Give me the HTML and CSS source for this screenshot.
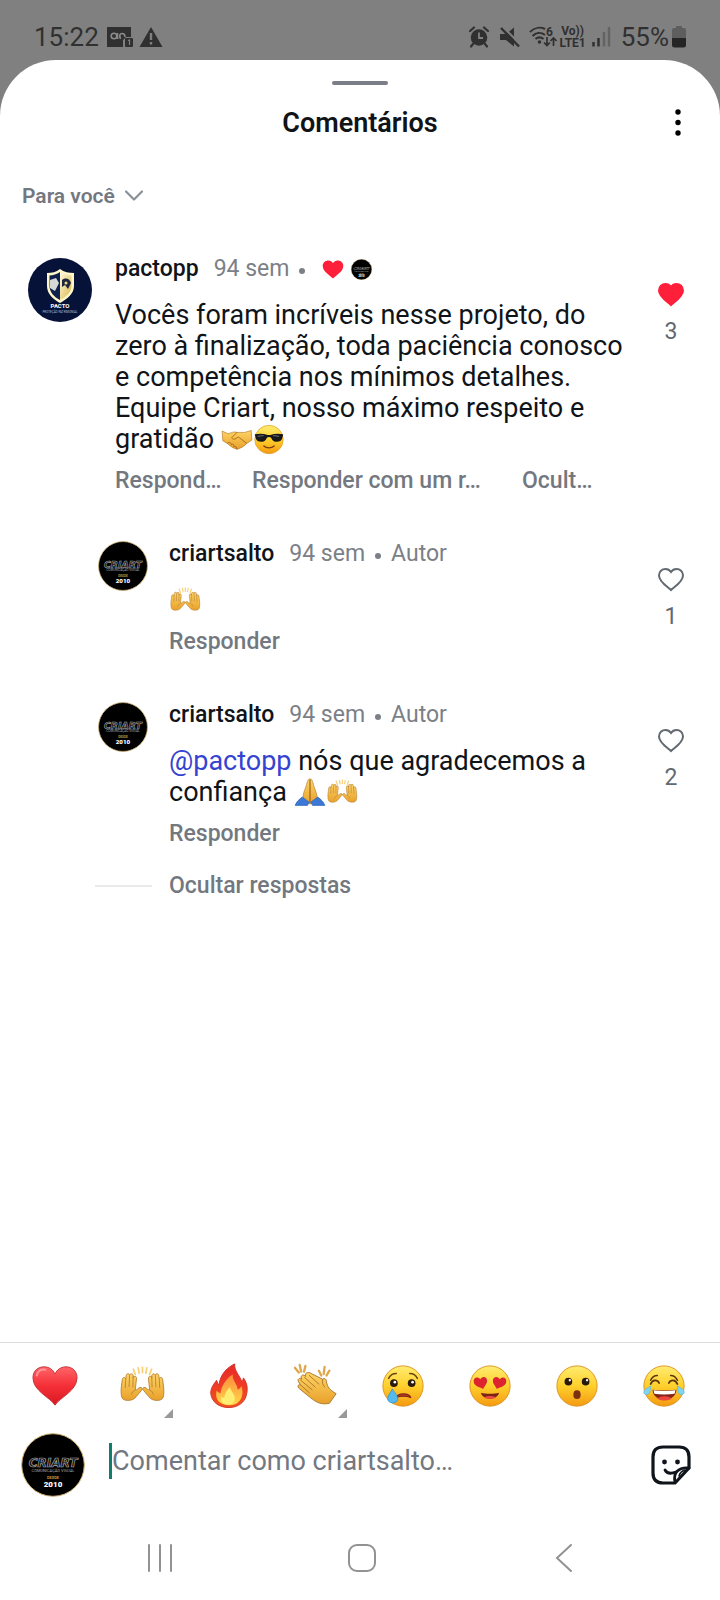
FILE: index.html
```html
<!DOCTYPE html>
<html lang="pt-BR">
<head>
  <meta charset="UTF-8">
  <meta name="viewport" content="width=device-width, initial-scale=1">
  <title>Comentários</title>
  <link rel="stylesheet" href="styles.css">
</head>
<body>

  <!-- símbolos reutilizados -->
  <svg class="sprite" aria-hidden="true">
    <defs>
      <linearGradient id="g-face" x1="0" y1="0" x2="0" y2="1">
        <stop offset="0" stop-color="#ffec70"/><stop offset=".5" stop-color="#ffd02c"/><stop offset="1" stop-color="#f59a12"/>
      </linearGradient>
      <linearGradient id="g-hand" x1="0" y1="0" x2="0" y2="1">
        <stop offset="0" stop-color="#ffd466"/><stop offset="1" stop-color="#e8a02a"/>
      </linearGradient>
      <linearGradient id="g-red" x1="0" y1="0" x2="0" y2="1">
        <stop offset="0" stop-color="#ff6468"/><stop offset=".5" stop-color="#f42f38"/><stop offset="1" stop-color="#da1822"/>
      </linearGradient>
      <linearGradient id="g-fire" x1="0" y1="0" x2="0" y2="1">
        <stop offset="0" stop-color="#e8282a"/><stop offset="1" stop-color="#f4511e"/>
      </linearGradient>
      <linearGradient id="g-flame" x1="0" y1="0" x2="0" y2="1">
        <stop offset="0" stop-color="#ff8a3c"/><stop offset="1" stop-color="#ffd84a"/>
      </linearGradient>
      <linearGradient id="g-gold" x1="0" y1="0" x2="1" y2="1">
        <stop offset="0" stop-color="#fffbe0"/><stop offset="1" stop-color="#d9b648"/>
      </linearGradient>
      <path id="hand-up" d="M2.5 34C1.5 28 3 22 3.5 17C3.8 14.5 7 14.5 7 17L7.5 13C7.8 10.5 11 10.8 11 13C11.5 10.5 15 11 14.8 13.5V15.5C15.5 13 18.7 13.5 18.2 16.5L17 28C19 28.5 20 26 22 25.5C24 25.5 25 27 23.5 28.5L18 35C16 38 13 39 9 39C5 39 3 37.5 2.5 34Z"/>
      <path id="hand-lines" d="M7 17L6.500 26M11 13L10.500 25M14.800 14L14.500 25.500M17 28C15 29 13.500 31 13 33"/>
    </defs>

    <symbol id="heart-emoji" viewBox="0 0 48 48">
      <path d="M24 44C19 36 1 29 1 15.500C1 8 6.500 4 12.500 4C18 4 22 7 24 11.500C26 7 30 4 35.500 4C41.500 4 47 8 47 15.500C47 29 29 36 24 44Z" fill="url(#g-red)" stroke="#c3343a"/>
      <path d="M5 13C6 8 10 6 14 7" stroke="#ffb0b0" stroke-width="2" fill="none" stroke-linecap="round" opacity=".7"/>
    </symbol>

    <symbol id="hands-emoji" viewBox="0 0 48 48">
      <path d="M15 6.500L17 12M20 5L21 10.500M24.500 4.500V10M29 5L28 10.500M34 6.500L32 12" stroke="#f8cf72" stroke-width="1.800" stroke-linecap="round"/>
      <g stroke="#b9853a" stroke-linejoin="round">
        <use href="#hand-up" fill="url(#g-hand)"/>
        <use href="#hand-lines" fill="none"/>
        <g transform="translate(49 0) scale(-1 1)">
          <use href="#hand-up" fill="url(#g-hand)"/>
          <use href="#hand-lines" fill="none"/>
        </g>
      </g>
    </symbol>

    <symbol id="fire-emoji" viewBox="0 0 48 48">
      <path d="M30 1C29 8 36 14 37 19C38.500 18 39 17 39 15.500C43 21 44 27 42 34C40 42 32 46.500 24 46.500C14 46.500 6 41 5 32C4.500 26 9 21 11 18C12 20 12 21 13.500 23C15 11 23 4 30 1Z" fill="url(#g-fire)" stroke="#d2332a"/>
      <path d="M28 12C27 18 33 22 33 28C35 27 36 26 37 24C40 33 37 44 24 44C14 44 9 38 11 29C13 31 14 31 15 32C16 24 21 16 28 12Z" fill="url(#g-flame)"/>
      <path d="M25 25C26 30 30 32 30 37C30 41 27 43.500 23 43.500C17 43.500 15 40 16 35C18 37 18 36 19 36C20 31 22 28 25 25Z" fill="#ffee72"/>
    </symbol>

    <symbol id="clap-emoji" viewBox="0 0 48 48">
      <path d="M2 5L6 10M7 2L8.500 9M13 3L11.500 9M27 8L29.500 13M33 4L32 11.500M38 8L35 13" stroke="#dfa74a" stroke-width="2.400" stroke-linecap="round"/>
      <path d="M6 20C4 17 7 15 9 17C7 13 11 11 13 14C12 10 16 9 19 11L31 17C33 15 35 17 35 20C36 25 38 28 45 32L38 42C30 44 24 41 18 36L7 27C4 25 5 22 8 23Z" fill="url(#g-hand)" stroke="#a9772c" stroke-linejoin="round"/>
      <path d="M8 18L20 28M12 15L23 25M17 13L27 22M8 23L17 31M31 17C30 20 31 23 33 25" stroke="#a9772c" fill="none" stroke-linecap="round"/>
    </symbol>

    <symbol id="cry-emoji" viewBox="0 0 48 48">
      <circle cx="24" cy="24" r="21" fill="url(#g-face)" stroke="#dd9423"/>
      <path d="M9 16C11 12 14 11 17 11M31 11C34 11 37 12 39 16" stroke="#6b4310" stroke-width="1.600" fill="none" stroke-linecap="round"/>
      <circle cx="14.500" cy="21" r="4" fill="#2a1a0c"/><circle cx="33" cy="21" r="4" fill="#2a1a0c"/>
      <circle cx="15.500" cy="20" r="1.400" fill="#fff"/><circle cx="34" cy="20" r="1.400" fill="#fff"/>
      <path d="M17 36C19 31 30 31 32 36C28 34 21 34 17 36Z" fill="#c9382c" stroke="#7b2413" stroke-width="1.400" stroke-linejoin="round"/>
      <path d="M13 27C15 31 19 34 18.500 38C18 43 8 43 8 37C8 34 11 31 13 27Z" fill="#53b9ee" stroke="#2e93cf" stroke-width=".8"/>
    </symbol>

    <symbol id="love-emoji" viewBox="0 0 48 48">
      <circle cx="24" cy="24" r="21" fill="url(#g-face)" stroke="#dd9423"/>
      <path d="M17 27C13 25 7 24 7 19C7 15 11 14 14 17C16 13 21 14 21 18.500C21 22 18 24 17 27Z" fill="#dd232e"/>
      <path d="M31 27C30 24 27 22 27 18.500C27 14 32 13 34 17C37 14 41 15 41 19C41 24 35 25 31 27Z" fill="#dd232e"/>
      <path d="M14.500 31C20 32.500 28 32.500 33.500 31C32 39 16 39 14.500 31Z" fill="#7b2413"/>
      <path d="M18 36C21 34 27 34 30 36C27 38 21 38 18 36Z" fill="#e94a46"/>
    </symbol>

    <symbol id="wow-emoji" viewBox="0 0 48 48">
      <circle cx="24" cy="24" r="21" fill="url(#g-face)" stroke="#dd9423"/>
      <circle cx="15" cy="19.500" r="4" fill="#2a1a0c"/><circle cx="33" cy="19.500" r="4" fill="#2a1a0c"/>
      <circle cx="16.500" cy="18" r="1.200" fill="#fff"/><circle cx="34.500" cy="18" r="1.200" fill="#fff"/>
      <ellipse cx="24" cy="33" rx="3.800" ry="4.500" fill="#7b3010"/>
    </symbol>

    <symbol id="joy-emoji" viewBox="0 0 48 48">
      <circle cx="24" cy="24" r="21" fill="url(#g-face)" stroke="#dd9423"/>
      <path d="M10 22C12 17 17 17 19 21M29 21C31 17 36 17 38 22M10 18C12 14 14 13 17 13M31 13C34 13 36 14 38 18" stroke="#5b3510" stroke-width="1.700" fill="none" stroke-linecap="round"/>
      <path d="M12 28C20 29 28 29 37 28C36 42 13 42 12 28Z" fill="#86251a"/>
      <path d="M13 28.500C20 29.500 28 29.500 36 28.500L35 32C28 33 20 33 14 32Z" fill="#fff"/>
      <path d="M17 37C21 34 28 34 32 37C28 40 21 40 17 37Z" fill="#ee4540"/>
      <path d="M10 24C10 29 9 33 6 33C2 33 2 29 5 27ZM38 24C38 29 39 33 42 33C46 33 46 29 43 27Z" fill="#7fd4f2" stroke="#54b4dc" stroke-width=".6"/>
    </symbol>

    <symbol id="cool-emoji" viewBox="0 0 48 48">
      <circle cx="24" cy="24" r="22" fill="url(#g-face)" stroke="#dd9423"/>
      <path d="M2 16C9 14.500 16 15 22 17H26C32 15 39 14.500 46 16L44.500 22C43 29 30 30 27.500 21.500C26 19.500 22 19.500 20.500 21.500C18 30 5 29 3.500 22Z" fill="#17181c"/>
      <path d="M7 19L15 18M31 18L39 19" stroke="#70747c" stroke-width="1.500" stroke-linecap="round"/>
      <path d="M16 34C20 38 28 38 32 34" stroke="#79400f" stroke-width="2" fill="none" stroke-linecap="round"/>
    </symbol>

    <symbol id="shake-emoji" viewBox="0 0 48 48">
      <path d="M1 11L10 15C15 14 19 11 24 13L36 13L46 10L47 25L39 30C36 34 29 38 24 39C19 38 13 34 9 30L2 26Z" fill="url(#g-hand)" stroke="#b07a28" stroke-linejoin="round"/>
      <path d="M24 13L16 21C17 25 21 24 26 20L39 30M9 30C13 27 15 29 15 32C18 30 20 32 19 35C22 34 24 36 24 39" stroke="#a66d20" stroke-width="1.500" fill="none" stroke-linecap="round"/>
    </symbol>

    <symbol id="pray-emoji" viewBox="0 0 48 48">
      <path d="M23.500 3C20 3 20 9 17 17C15 22 13 27 13 34L24 42L35 34C35 27 33 22 31 17C28 9 28 3 24.500 3Z" fill="url(#g-hand)" stroke="#b07a28" stroke-linejoin="round"/>
      <path d="M24 4V39" stroke="#98601a" stroke-width="1.800" fill="none"/>
      <path d="M12 31L23 39L20 44H1C3 38 7 35 12 31ZM36 31L25 39L28 44H47C45 38 41 35 36 31Z" fill="#3c79d6" stroke="#2a5fb5"/>
    </symbol>

    <symbol id="heart" viewBox="0 0 28 28">
      <path d="M14 25C11 22 2 17 2 10.500C2 6.500 5 4 8.500 4C11 4 13 5.500 14 7C15 5.500 17 4 19.500 4C23 4 26 6.500 26 10.500C26 17 17 22 14 25Z"/>
    </symbol>

    <symbol id="criart-logo" viewBox="0 0 64 64">
      <circle cx="32" cy="32" r="31.300" fill="#000" stroke="#cdb071"/>
      <text x="32" y="34" text-anchor="middle" font-family="DejaVu Sans, sans-serif" font-size="12" font-style="italic" font-weight="700" fill="#111" stroke="#aaa" stroke-width=".7">CRIART</text>
      <text x="32" y="39" text-anchor="middle" font-size="4" fill="#aaa">COMUNICAÇÃO VISUAL</text>
      <text x="32" y="46" text-anchor="middle" font-size="4" font-weight="700" fill="#c98f3c">DESDE</text>
      <text x="32" y="54" text-anchor="middle" font-size="8" font-weight="900" fill="#fff">2010</text>
    </symbol>
  </svg>

  <header class="status-bar">
    <div class="status-group">
      <span>15:22</span>
      <svg class="icon-voicemail" width="28" height="22" viewBox="0 0 28 22">
        <path d="M1 1H25V11H20L17 14V21H1Z" fill="#303030"/>
        <g fill="none" stroke="#8c8c8c" stroke-width="1.600"><circle cx="8" cy="10" r="2.800"/><path d="M11.500 7V13M14.500 13C13 9 14 7.500 16 7.500C18 7.500 19 9 19 11"/></g>
        <rect x="19" y="12" width="8" height="9" rx="1" fill="#303030"/><path d="M22 14.500L23.500 14V19" stroke="#808080" stroke-width="1.200" fill="none"/>
      </svg>
      <svg width="24" height="22" viewBox="0 0 24 22"><path d="M12 1L23.500 21H.5Z" fill="#303030"/><path d="M12 7V14M12 16V18.500" stroke="#808080" stroke-width="2.400"/></svg>
    </div>
    <div class="status-group">
      <svg class="icon-alarm" width="20" height="22" viewBox="0 0 20 22">
        <circle cx="10" cy="11.500" r="8.300" fill="#303030"/>
        <path d="M1 5L5 1.500M15 1.500L19 5M4 18L2 20.500M16 18L18 20.500" stroke="#303030" stroke-width="2.200" stroke-linecap="round"/>
        <path d="M10 6.500V12H14" stroke="#808080" stroke-width="1.800" fill="none"/>
      </svg>
      <svg class="icon-mute" width="22" height="22" viewBox="0 0 22 22">
        <path d="M1 8H7L15 1.500V20.500L7 14H1Z" fill="#303030"/><path d="M4 1L22 19" stroke="#808080" stroke-width="2"/><path d="M2 2L20 20.500" stroke="#303030" stroke-width="2.400"/>
      </svg>
      <svg width="28" height="22" viewBox="0 0 28 22">
        <g fill="none" stroke="#303030" stroke-width="2"><path d="M1 6C6 1 12 1 16 3M3.500 10C7 6.500 12 6 16 9M6.500 13C9 11 12 11 14.500 13"/><path d="M18 11V19M15 16.500L18 19.500L21 16.500M24.500 20V12.500M21.500 15L24.500 12L27.500 15" stroke-width="1.700"/></g>
        <circle cx="10.500" cy="16" r="1.800" fill="#303030"/>
        <text x="17" y="10" font-size="12" font-weight="700" fill="#303030">6</text>
      </svg>
      <span class="lte"><span>Vo))</span><span>LTE1</span></span>
      <svg class="icon-signal" width="20" height="22" viewBox="0 0 20 22"><path d="M2.500 16V20.500M7.500 12V20.500" stroke="#303030" stroke-width="2.500"/><path d="M13 6V20.500M18 1V20.500" stroke="#636363" stroke-width="2.500"/></svg>
      <span>55%</span>
      <svg class="icon-battery" width="14" height="22" viewBox="0 0 14 22"><path d="M4 0H10V2H12Q14 2 14 4V12H0V4Q0 2 2 2H4Z" fill="#5e5e5e"/><path d="M0 12H14V19Q14 21.500 11.500 21.500H2.500Q0 21.500 0 19Z" fill="#252525"/></svg>
    </div>
  </header>

  <main class="sheet">
    <div class="handle"></div>
    <div class="sheet-header">
      <h1>Comentários</h1>
      <button class="menu" aria-label="Mais opções">
        <svg width="6" height="28" viewBox="0 0 6 28"><circle cx="3" cy="3" r="2.700"/><circle cx="3" cy="13.500" r="2.700"/><circle cx="3" cy="24" r="2.700"/></svg>
      </button>
    </div>

    <button class="filter">
      Para você
      <svg width="18" height="12" viewBox="0 0 18 12"><path d="M1 1.500L9 9.500L17 1.500" fill="none" stroke="#8b9097" stroke-width="2.200" stroke-linecap="round" stroke-linejoin="round"/></svg>
    </button>

    <section class="comments">
      <article class="comment">
        <svg class="avatar" viewBox="0 0 64 64">
          <circle cx="32" cy="32" r="32" fill="#071238"/>
          <path d="M32 11C28 14 24 15 19 15V28C19 36 25 41 32 45C39 41 46 36 46 28V15C41 15 36 14 32 11Z" fill="#fff7c9"/>
          <path d="M32 14C29 16 25 17.500 21.500 17.500V28C21.500 34 26 39 32 42Z" fill="#10204c"/>
          <path d="M32 14C36 16 40 17.500 43.500 17.500V28C43.500 34 38 39 32 42Z" fill="url(#g-gold)"/>
          <path d="M22 22L28 20L31 25L27 33L22 30Z" fill="#d5d8d6"/>
          <path d="M34 22C38 19 42 21 43 25L40 31L37 27L34 29Z" fill="#1e2740"/><circle cx="38" cy="25" r="1.500" fill="#eed980"/>
          <text x="32" y="50" text-anchor="middle" font-size="6" font-weight="700" fill="#fff">PACTO</text>
          <text x="32" y="55" text-anchor="middle" font-size="3" fill="#b6bac9">PROTEÇÃO PATRIMONIAL</text>
        </svg>
        <div class="content">
          <div class="meta">
            <a href="#" class="user">pactopp</a>
            <span>94 sem</span><i class="dot"></i>
            <svg class="mini-heart" viewBox="0 0 28 28"><use href="#heart"/></svg>
            <svg class="mini-avatar" viewBox="0 0 64 64"><use href="#criart-logo"/></svg>
          </div>
          <p>Vocês foram incríveis nesse projeto, do zero à finalização, toda paciência conosco e competência nos mínimos detalhes. Equipe Criart, nosso máximo respeito e gratidão <svg class="emoji" role="img" aria-label="aperto de mãos"><use href="#shake-emoji"/></svg><svg class="emoji" role="img" aria-label="óculos escuros"><use href="#cool-emoji"/></svg></p>
          <div class="actions">
            <button>Respond…</button>
            <button>Responder com um r…</button>
            <button>Ocult…</button>
          </div>
        </div>
        <button class="like liked"><svg viewBox="0 0 28 28"><use href="#heart"/></svg>3</button>
      </article>

      <article class="comment reply">
        <svg class="avatar" viewBox="0 0 64 64"><use href="#criart-logo"/></svg>
        <div class="content">
          <div class="meta">
            <a href="#" class="user">criartsalto</a>
            <span>94 sem</span><i class="dot"></i><span>Autor</span>
          </div>
          <p><svg class="emoji" role="img" aria-label="mãos para cima"><use href="#hands-emoji"/></svg></p>
          <div class="actions"><button>Responder</button></div>
        </div>
        <button class="like"><svg viewBox="0 0 28 28"><use href="#heart"/></svg>1</button>
      </article>

      <article class="comment reply">
        <svg class="avatar" viewBox="0 0 64 64"><use href="#criart-logo"/></svg>
        <div class="content">
          <div class="meta">
            <a href="#" class="user">criartsalto</a>
            <span>94 sem</span><i class="dot"></i><span>Autor</span>
          </div>
          <p><a href="#" class="mention">@pactopp</a> nós que agradecemos a confiança <svg class="emoji" role="img" aria-label="mãos juntas"><use href="#pray-emoji"/></svg><svg class="emoji" role="img" aria-label="mãos para cima"><use href="#hands-emoji"/></svg></p>
          <div class="actions"><button>Responder</button></div>
        </div>
        <button class="like"><svg viewBox="0 0 28 28"><use href="#heart"/></svg>2</button>
      </article>

      <button class="hide-replies">Ocultar respostas</button>
    </section>

    <footer class="composer">
      <div class="reactions">
        <button aria-label="Coração"><svg><use href="#heart-emoji"/></svg></button>
        <button class="variants" aria-label="Mãos para cima"><svg><use href="#hands-emoji"/></svg></button>
        <button aria-label="Fogo"><svg><use href="#fire-emoji"/></svg></button>
        <button class="variants" aria-label="Palmas"><svg><use href="#clap-emoji"/></svg></button>
        <button aria-label="Choro"><svg><use href="#cry-emoji"/></svg></button>
        <button aria-label="Apaixonado"><svg><use href="#love-emoji"/></svg></button>
        <button aria-label="Surpreso"><svg><use href="#wow-emoji"/></svg></button>
        <button aria-label="Risada"><svg><use href="#joy-emoji"/></svg></button>
      </div>
      <div class="write">
        <svg class="avatar" viewBox="0 0 64 64"><use href="#criart-logo"/></svg>
        <input type="text" aria-label="Comentário" placeholder="Comentar como criartsalto…">
        <button class="sticker" aria-label="Figurinhas">
          <svg width="40" height="40" viewBox="0 0 40 40" fill="none" stroke="#10151b" stroke-width="3.200" stroke-linejoin="round" stroke-linecap="round">
            <path d="M12 2H28Q38 2 38 12V23L24 38H12Q2 38 2 28V12Q2 2 12 2Z"/>
            <path d="M24 37C22 28 27 22 38 23" stroke-width="2.800"/>
            <path d="M14 25C16 29 20 29 25 27" stroke-width="2.800"/>
            <path d="M28 31C29 27 31 26 34 25" stroke-width="1.500"/>
            <circle cx="13.500" cy="17" r="2.400" fill="#10151b" stroke="none"/><circle cx="26.500" cy="17" r="2.400" fill="#10151b" stroke="none"/>
          </svg>
        </button>
      </div>
    </footer>

    <nav class="system-nav">
      <button aria-label="Recentes"><svg viewBox="0 0 30 30"><path d="M4 2V28M15 2V28M26 2V28"/></svg></button>
      <button aria-label="Início"><svg viewBox="0 0 30 30"><rect x="2" y="2" width="26" height="26" rx="8"/></svg></button>
      <button aria-label="Voltar"><svg viewBox="0 0 30 30"><path d="M22 2L8 15L22 28"/></svg></button>
    </nav>
  </main>

</body>
</html>
```
FILE: styles.css
```css
* {
  box-sizing: border-box;
}
body {
  margin: 0;
  min-height: 100vh;
  display: flex;
  flex-direction: column;
  background-color: #808080;
  font-family: Roboto, sans-serif;
  color: #101418;
}
h1, p {
  margin: 0;
}
a {
  color: inherit;
  text-decoration: none;
}
button {
  padding: 0;
  border: none;
  background: none;
  font: inherit;
  color: inherit;
  cursor: pointer;
}
svg {
  flex-shrink: 0;
}
.sprite {
  position: absolute;
  width: 0;
  height: 0;
}

/* barra de status */
.status-bar {
  height: 60px;
  padding: 14px 34px 0 34px;
  display: flex;
  justify-content: space-between;
  align-items: center;
  color: #303030;
  font-size: 26px;
  line-height: 30px;
}
.status-group {
  display: flex;
  align-items: center;
}
.icon-voicemail { margin: 0 5px 0 7px; }
.icon-alarm { margin-right: 10px; }
.icon-mute { margin-right: 8px; }
.icon-signal { margin: 0 10px 0 5px; }
.icon-battery { margin-left: 3px; }
.lte {
  display: flex;
  flex-direction: column;
  align-items: center;
  margin-left: 2px;
  font-size: 12px;
  font-weight: 700;
  line-height: 12px;
}

.sheet {
  flex: 1;
  display: flex;
  flex-direction: column;
  background-color: #fff;
  border-radius: 56px 56px 0 0;
}
.handle {
  width: 56px;
  height: 4px;
  margin: 21px auto 0;
  border-radius: 2px;
  background-color: #7b7d87;
}
.sheet-header {
  display: grid;
  grid-template-columns: 1fr auto 1fr;
  align-items: center;
  padding: 22px 39px 0;
}
.sheet-header h1 {
  grid-column: 2;
  font-size: 27px;
  font-weight: 600;
  line-height: 32px;
}
.menu {
  justify-self: end;
  display: flex;
}
.filter {
  align-self: flex-start;
  display: flex;
  align-items: center;
  gap: 10px;
  margin: 43px 0 0 22px;
  font-size: 21px;
  font-weight: 600;
  line-height: 28px;
  color: #737880;
}

/* comentários */
.comments {
  display: flex;
  flex-direction: column;
  padding-top: 45px;
}
.comment {
  display: grid;
  grid-template-columns: 115px 1fr 98px;
  align-items: start;
  margin-bottom: 45px;
}
.avatar {
  width: 64px;
  height: 64px;
}
.comment .avatar {
  margin: 3px 0 0 28px;
}
.reply {
  grid-template-columns: 169px 1fr 98px;
}
.reply .avatar {
  width: 50px;
  height: 50px;
  margin: 1px 0 0 98px;
}
.meta {
  display: flex;
  align-items: center;
  font-size: 23px;
  line-height: 28px;
  color: #7b8087;
}
.user {
  margin-right: 15px;
  font-weight: 500;
  color: #101418;
}
.dot {
  width: 6px;
  height: 6px;
  margin: 4px 10px 0 10px;
  border-radius: 50%;
  background-color: #7b8087;
}
.mini-heart {
  width: 24px;
  height: 24px;
  margin: 0 6px;
  fill: #fe1f3a;
}
.mini-avatar {
  width: 21px;
  height: 21px;
}
/* o texto avança um pouco sobre a coluna das curtidas */
.comment p {
  margin: 17px -8px 0 0;
  font-size: 27px;
  line-height: 31px;
}
.mention {
  color: #3443d0;
}
.emoji {
  width: 32px;
  height: 31px;
  vertical-align: top;
}
.actions {
  display: grid;
  grid-template-columns: 137px 270px 1fr;
  margin-top: 12px;
}
.actions button,
.hide-replies {
  font-size: 23px;
  font-weight: 500;
  line-height: 28px;
  text-align: left;
  white-space: nowrap;
  color: #737880;
}
.like {
  display: flex;
  flex-direction: column;
  align-items: center;
  gap: 10px;
  padding-top: 25px;
  font-size: 23px;
  line-height: 28px;
  color: #636971;
}
.like svg {
  width: 28px;
  height: 28px;
  fill: none;
  stroke: #636971;
  stroke-width: 2;
}
.like.liked svg {
  fill: #fe1f3a;
  stroke: #fe1f3a;
}
.hide-replies {
  display: flex;
  align-items: center;
  gap: 17px;
  margin: -21px 0 0 95px;
}
.hide-replies::before {
  content: "";
  width: 57px;
  height: 2px;
  background-color: #e9eaec;
}

/* rodapé */
.composer {
  margin-top: auto;
  border-top: 1px solid #dcdddf;
}
.reactions {
  display: grid;
  grid-template-columns: repeat(8, 1fr);
  padding: 10px 13px 0 11px;
}
.reactions button {
  position: relative;
  display: flex;
  justify-content: center;
  align-items: center;
  height: 66px;
}
.reactions svg {
  width: 46px;
  height: 46px;
}
.variants::after {
  content: "";
  position: absolute;
  right: 12px;
  bottom: 1px;
  border-left: 9px solid transparent;
  border-bottom: 9px solid #999;
}
.write {
  display: flex;
  align-items: center;
  padding: 14px 29px 0 21px;
}
.write input {
  flex: 1;
  min-width: 0;
  height: 36px;
  margin: 0 20px 8px 24px;
  padding: 0;
  border: none;
  border-left: 3px solid #137d6d;
  outline: none;
  font: 27px Roboto, sans-serif;
  color: #101418;
}
.write input::placeholder {
  color: #737880;
  opacity: 1;
}
.sticker {
  display: flex;
}
.system-nav {
  display: flex;
  justify-content: space-between;
  height: 103px;
  padding: 46px 141px 27px 145px;
}
.system-nav svg {
  display: block;
  width: 30px;
  height: 30px;
  fill: none;
  stroke: #929292;
  stroke-width: 2;
  stroke-linecap: round;
}
```
